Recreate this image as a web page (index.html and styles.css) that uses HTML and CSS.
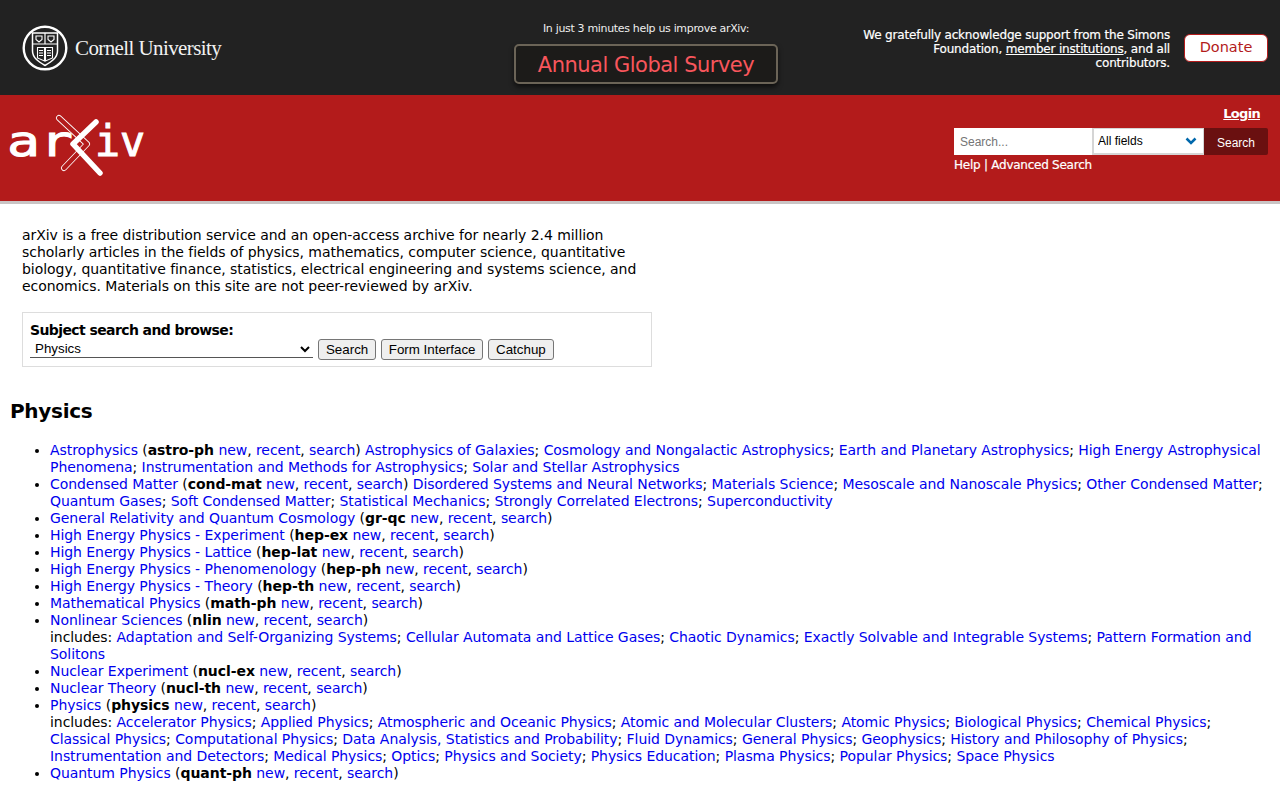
FILE: index.html
```html
<!DOCTYPE html>
<html lang="en">
<head>
    <meta charset="UTF-8">
    <meta name="viewport" content="width=device-width, initial-scale=1.0">
    <title>arXiv.org e-Print archive</title>
    <link rel="stylesheet" href="styles.css">
</head>
<body>
    <!-- Cornell / support banner -->
    <div class="top-bar">
        <a class="cornell" href="#">
            <svg class="seal" width="46" height="46" viewBox="0 0 46 46">
                <circle cx="23" cy="23" r="21.300" fill="none" stroke="#fff" stroke-width="2.400"/>
                <path d="M10.500 8H35.500V26C35.500 33 29 37 23 40.500C17 37 10.500 33 10.500 26Z" fill="none" stroke="#fff" stroke-width="1.500"/>
                <path d="M10.500 19H35.500M23 8V19" stroke="#fff" stroke-width="1.200"/>
                <path d="M14 11H20V14.500L17 17L14 14.500ZM26 11H32V14.500L29 17L26 14.500Z" fill="none" stroke="#fff" stroke-width="1.100"/>
                <path d="M15.500 22.500H22.500V36L15.500 33ZM23.500 22.500H30.500V33L23.500 36Z" fill="none" stroke="#fff" stroke-width="1.100"/>
                <path d="M17 25.500H21M17 28H21M17 30.500H21M25 25.500H29M25 28H29M25 30.500H29" stroke="#fff" stroke-width="1"/>
            </svg>
            <span class="cornell-name">Cornell University</span>
        </a>
        <div class="survey">
            <div class="survey-note">In just 3 minutes help us improve arXiv:</div>
            <a class="survey-btn" href="#">Annual Global Survey</a>
        </div>
        <div class="support">
            <p>We gratefully acknowledge support from the Simons Foundation, <a href="#">member institutions</a>, and all contributors.</p>
            <a class="donate" href="#">Donate</a>
        </div>
    </div>

    <!-- arXiv header -->
    <div class="red-bar">
        <svg class="logo" width="145" height="62" viewBox="-4 0 145 62">
            <text class="logo-text" x="-2" y="42" textLength="66" lengthAdjust="spacingAndGlyphs">ar</text>
            <text class="logo-text" x="86" y="42" textLength="50" lengthAdjust="spacingAndGlyphs">iv</text>
            <path class="stick-out" d="M50 4L78 30L55 54"/>
            <path class="stick-in" d="M50 4L78 30L55 54"/>
            <path class="x-bold" d="M87 8L64 30L91 59"/>
        </svg>
        <div class="search-area">
            <a class="login" href="#">Login</a>
            <form class="search-form">
                <input class="search-input" type="text" placeholder="Search...">
                <select class="search-select"><option>All fields</option></select>
                <button class="search-btn" type="button">Search</button>
            </form>
            <div class="search-links"><a href="#">Help</a> | <a href="#">Advanced Search</a></div>
        </div>
    </div>

    <div class="content">
        <p class="intro">arXiv is a free distribution service and an open-access archive for nearly 2.4 million scholarly articles in the fields of physics, mathematics, computer science, quantitative biology, quantitative finance, statistics, electrical engineering and systems science, and economics. Materials on this site are not peer-reviewed by arXiv.</p>

        <form class="subject-box">
            <label class="subject-label">Subject search and browse:</label>
            <div class="subject-row">
                <select class="subject-select"><option>Physics</option></select>
                <input type="button" value="Search">
                <input type="button" value="Form Interface">
                <input type="button" value="Catchup">
            </div>
        </form>

        <h2>Physics</h2>
        <ul>
            <li><a href="#">Astrophysics</a> (<b>astro-ph</b> <a href="#">new</a>, <a href="#">recent</a>, <a href="#">search</a>) <a href="#">Astrophysics of Galaxies</a>; <a href="#">Cosmology and Nongalactic Astrophysics</a>; <a href="#">Earth and Planetary Astrophysics</a>; <a href="#">High Energy Astrophysical Phenomena</a>; <a href="#">Instrumentation and Methods for Astrophysics</a>; <a href="#">Solar and Stellar Astrophysics</a></li>
            <li><a href="#">Condensed Matter</a> (<b>cond-mat</b> <a href="#">new</a>, <a href="#">recent</a>, <a href="#">search</a>) <a href="#">Disordered Systems and Neural Networks</a>; <a href="#">Materials Science</a>; <a href="#">Mesoscale and Nanoscale Physics</a>; <a href="#">Other Condensed Matter</a>; <a href="#">Quantum Gases</a>; <a href="#">Soft Condensed Matter</a>; <a href="#">Statistical Mechanics</a>; <a href="#">Strongly Correlated Electrons</a>; <a href="#">Superconductivity</a></li>
            <li><a href="#">General Relativity and Quantum Cosmology</a> (<b>gr-qc</b> <a href="#">new</a>, <a href="#">recent</a>, <a href="#">search</a>)</li>
            <li><a href="#">High Energy Physics - Experiment</a> (<b>hep-ex</b> <a href="#">new</a>, <a href="#">recent</a>, <a href="#">search</a>)</li>
            <li><a href="#">High Energy Physics - Lattice</a> (<b>hep-lat</b> <a href="#">new</a>, <a href="#">recent</a>, <a href="#">search</a>)</li>
            <li><a href="#">High Energy Physics - Phenomenology</a> (<b>hep-ph</b> <a href="#">new</a>, <a href="#">recent</a>, <a href="#">search</a>)</li>
            <li><a href="#">High Energy Physics - Theory</a> (<b>hep-th</b> <a href="#">new</a>, <a href="#">recent</a>, <a href="#">search</a>)</li>
            <li><a href="#">Mathematical Physics</a> (<b>math-ph</b> <a href="#">new</a>, <a href="#">recent</a>, <a href="#">search</a>)</li>
            <li><a href="#">Nonlinear Sciences</a> (<b>nlin</b> <a href="#">new</a>, <a href="#">recent</a>, <a href="#">search</a>)<br>includes: <a href="#">Adaptation and Self-Organizing Systems</a>; <a href="#">Cellular Automata and Lattice Gases</a>; <a href="#">Chaotic Dynamics</a>; <a href="#">Exactly Solvable and Integrable Systems</a>; <a href="#">Pattern Formation and Solitons</a></li>
            <li><a href="#">Nuclear Experiment</a> (<b>nucl-ex</b> <a href="#">new</a>, <a href="#">recent</a>, <a href="#">search</a>)</li>
            <li><a href="#">Nuclear Theory</a> (<b>nucl-th</b> <a href="#">new</a>, <a href="#">recent</a>, <a href="#">search</a>)</li>
            <li><a href="#">Physics</a> (<b>physics</b> <a href="#">new</a>, <a href="#">recent</a>, <a href="#">search</a>)<br>includes: <a href="#">Accelerator Physics</a>; <a href="#">Applied Physics</a>; <a href="#">Atmospheric and Oceanic Physics</a>; <a href="#">Atomic and Molecular Clusters</a>; <a href="#">Atomic Physics</a>; <a href="#">Biological Physics</a>; <a href="#">Chemical Physics</a>; <a href="#">Classical Physics</a>; <a href="#">Computational Physics</a>; <a href="#">Data Analysis, Statistics and Probability</a>; <a href="#">Fluid Dynamics</a>; <a href="#">General Physics</a>; <a href="#">Geophysics</a>; <a href="#">History and Philosophy of Physics</a>; <a href="#">Instrumentation and Detectors</a>; <a href="#">Medical Physics</a>; <a href="#">Optics</a>; <a href="#">Physics and Society</a>; <a href="#">Physics Education</a>; <a href="#">Plasma Physics</a>; <a href="#">Popular Physics</a>; <a href="#">Space Physics</a></li>
            <li><a href="#">Quantum Physics</a> (<b>quant-ph</b> <a href="#">new</a>, <a href="#">recent</a>, <a href="#">search</a>)</li>
        </ul>
    </div>
</body>
</html>
```

FILE: styles.css
```css
html, body { height: 800px; overflow: hidden; }
body { margin: 0; font-family: "DejaVu Sans", sans-serif; font-size: 14px; line-height: 17px; color: #000; background: #fff; }
a { color: #0000ee; text-decoration: none; }

.top-bar { height: 95px; background: #222; color: #fff; display: flex; align-items: flex-start; }
.cornell { display: flex; align-items: center; margin: 25px 0 0 22px; width: 340px; color: #f2f2f2; }
.seal { flex: none; }
.cornell-name { font-family: "Liberation Serif", serif; font-size: 21px; letter-spacing: -0.6px; line-height: 46px; margin: 0 0 0 7px; }

.survey { width: 264px; margin: 21px 0 0 152px; text-align: center; }
.survey-note { font-size: 11px; line-height: 15px; letter-spacing: -0.33px; color: #eee; }
.survey-btn { display: block; box-sizing: border-box; height: 40px; margin-top: 8px; border: 2px solid #6b6457; border-radius: 5px; background: #1c1b19; color: #f8565c; font-size: 21px; line-height: 38px; letter-spacing: -0.5px; box-shadow: 0 3px 5px rgba(0, 0, 0, 0.6); }

.support { display: flex; align-items: flex-start; margin-left: auto; }
.support p { width: 310px; margin: 28px 0 0; font-size: 12px; line-height: 14px; letter-spacing: -0.18px; text-align: right; -webkit-text-stroke: 0.2px; }
.support p a { color: #fff; text-decoration: underline; }
.donate { box-sizing: border-box; width: 84px; height: 28px; margin: 34px 12px 0 14px; border: 1px solid #b31b1b; border-radius: 6px; background: #fff; color: #b31b1b; font-size: 14.5px; line-height: 24px; text-align: center; }

.red-bar { height: 106px; background: #b31b1b; border-bottom: 3px solid #c9c4c4; display: flex; justify-content: space-between; align-items: flex-start; }
.logo { margin: 19px 0 0 5px; }
.logo-text { font-family: "DejaVu Sans Mono", monospace; font-size: 42px; fill: #fff; stroke: #fff; stroke-width: 1px; }
.stick-out, .stick-in, .x-bold { fill: none; stroke-linecap: round; stroke-linejoin: round; }
.stick-out { stroke: #fff; stroke-width: 6; }
.stick-in { stroke: #b31b1b; stroke-width: 4.4; }
.x-bold { stroke: #fff; stroke-width: 5.5; }

.search-area { width: 314px; margin-right: 12px; color: #fff; font-size: 12px; }
.search-area a { color: #fff; }
.login { display: block; margin: 10px 8px 0 0; text-align: right; font-size: 13px; font-weight: bold; line-height: 17px; letter-spacing: -0.7px; text-decoration: underline !important; }
.search-form { display: flex; height: 27px; margin-top: 6px; }
.search-input { box-sizing: border-box; width: 138px; height: 27px; border: 0; margin: 0; padding: 0 6px; background: #fff; font-family: "Liberation Sans", sans-serif; font-size: 12px; }
.search-input::placeholder { color: #757575; }
.search-select { box-sizing: border-box; width: 112px; height: 27px; border: 1px solid #d5d5d5; border-width: 1px 1px 2px 2px; border-radius: 0; margin: 0; padding: 0 4px; appearance: none; background: #fff url("data:image/svg+xml,%3Csvg xmlns='http://www.w3.org/2000/svg' width='12' height='8'%3E%3Cpath d='M1.500 1.500L6 6L10.500 1.500' fill='none' stroke='%230068ac' stroke-width='2.500'/%3E%3C/svg%3E") no-repeat right 6px center; color: #000; font-family: "Liberation Sans", sans-serif; font-size: 12px; }
.search-btn { width: 64px; height: 27px; border: 0; border-radius: 0 2px 2px 0; margin: 0; padding: 3px 0 0; background: #6a1010; color: #fff; font-family: "Liberation Sans", sans-serif; font-size: 12px; }
.search-links { margin-top: 2px; line-height: 17px; letter-spacing: -0.25px; -webkit-text-stroke: 0.2px; }

.content { padding: 0 10px; }
.intro { width: 620px; margin: 23px 0 0 12px; letter-spacing: -0.05px; }
.subject-box { box-sizing: border-box; width: 630px; height: 55px; margin: 17px 0 0 12px; padding: 9px 7px 0; border: 1px solid #ddd; }
.subject-label { display: block; font-weight: bold; line-height: 17px; letter-spacing: -0.6px; }
.subject-row { display: flex; align-items: center; gap: 4.6px; height: 20px; }
.subject-select { box-sizing: border-box; width: 283.4px; height: 18px; border: 0; border-bottom: 1px solid #555; padding: 0 0 0 1px; margin: 0; background: #fff; font-family: "Liberation Sans", sans-serif; font-size: 13.33px; }
.subject-row input { box-sizing: border-box; height: 21px; margin: 0; padding: 0 7px; border: 1px solid #767676; border-radius: 3px; background: #efefef; font-family: "Liberation Sans", sans-serif; font-size: 13.33px; }

h2 { margin: 32px 0 0; font-size: 20px; line-height: 24px; letter-spacing: -0.3px; }
ul { margin: 19px 0 0; padding: 0 0 0 40px; letter-spacing: -0.06px; }
```
